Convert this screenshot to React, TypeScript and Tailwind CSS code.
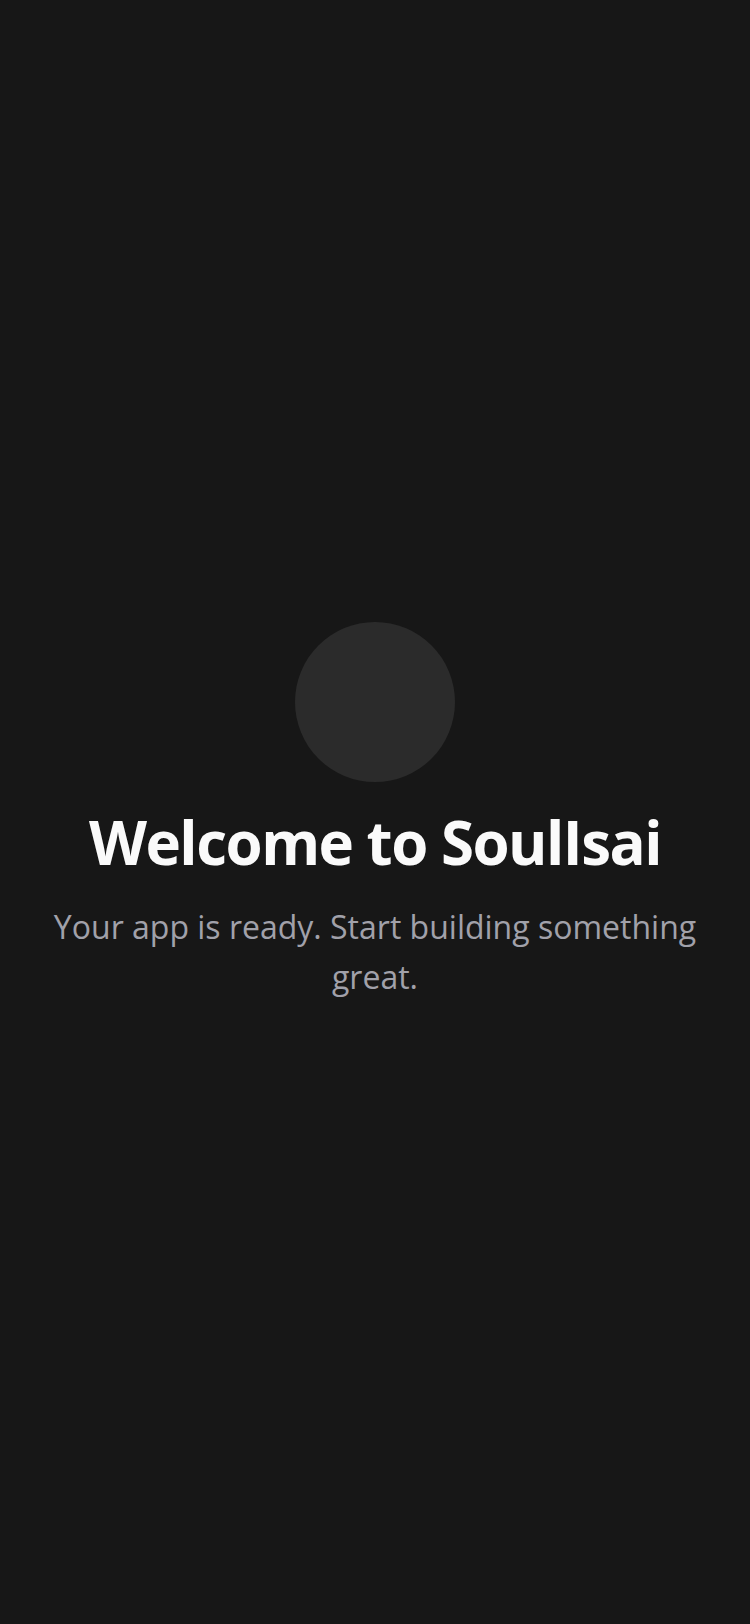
export default function App() {
  return (
    <div className="min-h-screen w-full bg-[#171717] flex flex-col items-center justify-center px-6 text-center" style={{ fontFamily: '"Open Sans", "Noto Sans", sans-serif' }}>
      <div className="w-[160px] h-[160px] rounded-full bg-[#2b2b2b] mb-6" />
      <h1 className="text-[60px] leading-[72px] font-bold tracking-tight text-[#fafafa] mb-6">Welcome to SoulIsai</h1>
      <p className="text-[32px] leading-[49.6px] text-[#a1a1aa] max-w-[660px]">Your app is ready. Start building something great.</p>
    </div>
  );
}
